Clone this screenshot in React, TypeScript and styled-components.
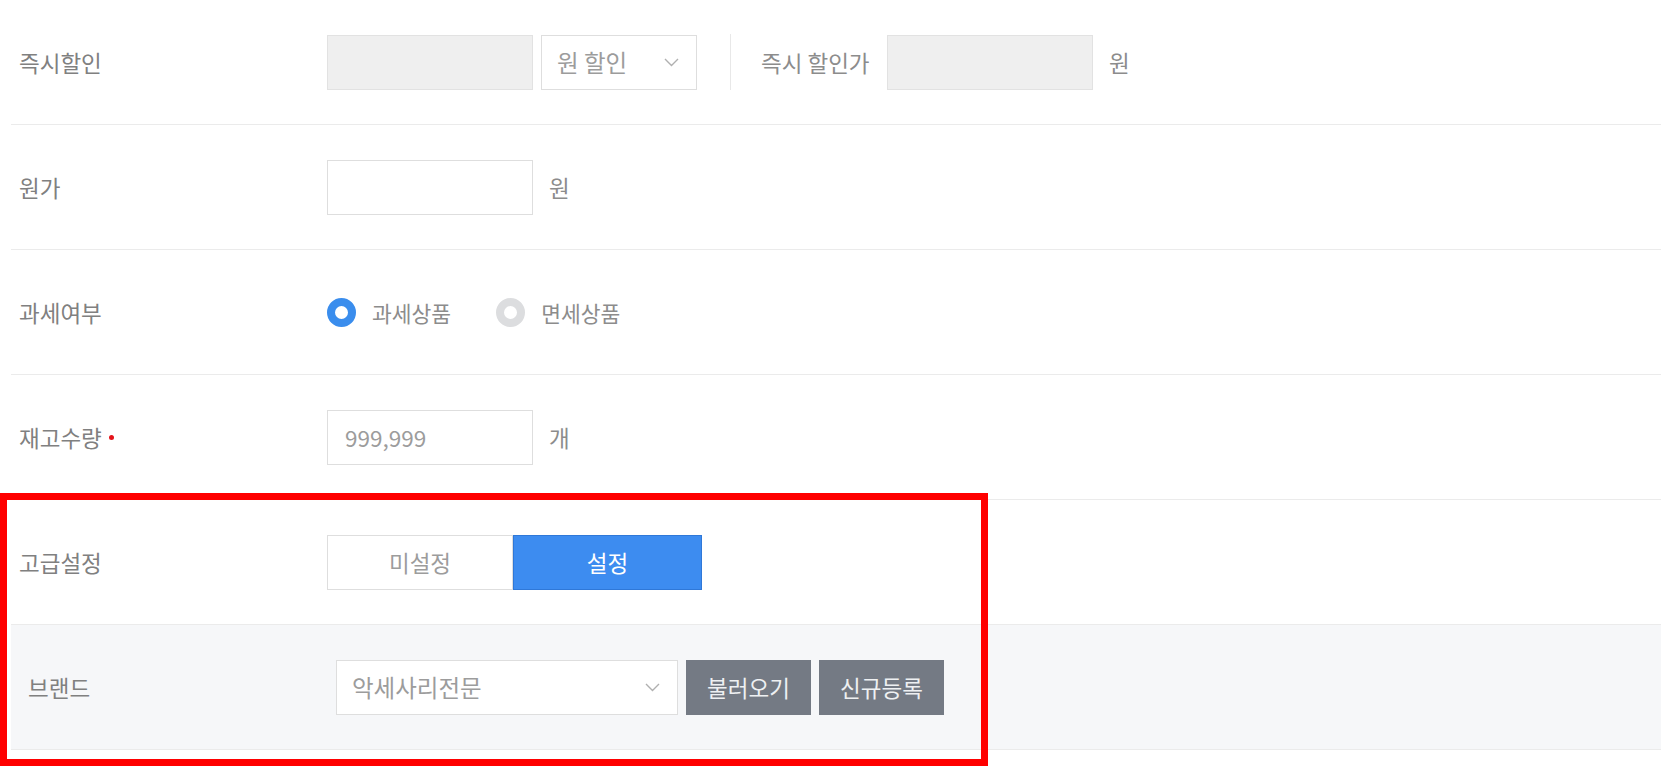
import React from "react";
import styled, { createGlobalStyle } from "styled-components";

const GlobalStyle = createGlobalStyle`
  html, body {
    margin: 0;
    padding: 0;
    background: #fff;
  }
  body {
    font-family: "Noto Sans CJK KR", "Noto Sans", sans-serif;
    overflow: hidden;
  }
`;

const Page = styled.div`
  position: relative;
  width: 1661px;
  height: 766px;
  overflow: hidden;
`;

const List = styled.div`
  margin-left: 11px;
`;

const Row = styled.div<{ $sub?: boolean }>`
  display: flex;
  align-items: center;
  height: 124px;
  padding-left: ${(p) => (p.$sub ? "17px" : "8px")};
  border-bottom: 1px solid #ebebeb;
  background: ${(p) => (p.$sub ? "#f6f7f9" : "#fff")};
  box-sizing: content-box;
`;

const Label = styled.div`
  width: 308px;
  display: flex;
  align-items: center;
  gap: 7px;
  font-size: 22.5px;
  color: #808080;
`;

const Required = styled.span`
  width: 5px;
  height: 5px;
  border-radius: 50%;
  background: #e4141b;
`;

const Field = styled.div`
  display: flex;
  align-items: center;
`;

const Input = styled.div<{ $disabled?: boolean }>`
  box-sizing: border-box;
  width: 206px;
  height: 55px;
  border: 1px solid ${(p) => (p.$disabled ? "#e2e2e2" : "#dedede")};
  background: ${(p) => (p.$disabled ? "#efefef" : "#fff")};
  padding-left: 17px;
  display: flex;
  align-items: center;
  font-size: 22.5px;
  color: #9c9c9c;
`;

const Select = styled.div<{ $width: number; $first?: boolean }>`
  box-sizing: border-box;
  width: ${(p) => p.$width}px;
  height: 55px;
  border: 1px solid #dedede;
  background: #fff;
  padding: 0 17px 0 15px;
  display: flex;
  align-items: center;
  justify-content: space-between;
  font-size: 23.5px;
  color: #9c9c9c;
  margin-left: ${(p) => (p.$first ? 0 : 8)}px;
`;

const Unit = styled.span`
  font-size: 22.5px;
  color: #8c8c8c;
  margin-left: 16px;
`;

const Divider = styled.div`
  width: 1px;
  height: 56px;
  background: #e8e8e8;
  margin: 0 30px 0 33px;
`;

const InlineLabel = styled.span`
  width: 126px;
  font-size: 22.5px;
  color: #8c8c8c;
  white-space: nowrap;
`;

const RadioGroup = styled.div`
  display: flex;
  align-items: center;
  gap: 45px;
`;

const RadioItem = styled.label`
  display: flex;
  align-items: center;
  gap: 16px;
  font-size: 21.5px;
  color: #8c8c8c;
`;

const RadioDot = styled.span<{ $on?: boolean }>`
  box-sizing: border-box;
  width: 29px;
  height: 29px;
  border-radius: 50%;
  border: 8px solid ${(p) => (p.$on ? "#3a8ded" : "#dcdddf")};
  background: #fff;
`;

const Segment = styled.div`
  display: flex;
`;

const SegButton = styled.button<{ $active?: boolean }>`
  box-sizing: border-box;
  height: 55px;
  width: ${(p) => (p.$active ? 189 : 186)}px;
  border: 1px solid ${(p) => (p.$active ? "#2f78d8" : "#dedede")};
  background: ${(p) => (p.$active ? "#3d8cf0" : "#fff")};
  color: ${(p) => (p.$active ? "#fff" : "#9c9c9c")};
  font-family: inherit;
  font-size: 22.5px;
  padding: 0;
`;

const DarkButton = styled.button`
  box-sizing: border-box;
  width: 125px;
  height: 55px;
  margin-left: 8px;
  border: none;
  background: #747a84;
  color: #eef0f2;
  font-family: inherit;
  font-size: 22.5px;
  padding: 0;
`;

const Frame = styled.div`
  position: absolute;
  left: 0;
  top: 493px;
  width: 988px;
  height: 273px;
  box-sizing: border-box;
  border: 7px solid #ff0000;
  pointer-events: none;
`;

function Chevron() {
  return (
    <svg width="15" height="9" viewBox="0 0 15 9">
      <polyline
        points="1,1 7.5,7.5 14,1"
        fill="none"
        stroke="#b0b0b0"
        strokeWidth="1.4"
      />
    </svg>
  );
}

export default function App() {
  return (
    <Page>
      <GlobalStyle />
      <List>
        <Row>
          <Label>즉시할인</Label>
          <Field>
            <Input $disabled />
            <Select $width={156}>
              <span>원 할인</span>
              <Chevron />
            </Select>
            <Divider />
            <InlineLabel>즉시 할인가</InlineLabel>
            <Input $disabled />
            <Unit>원</Unit>
          </Field>
        </Row>
        <Row>
          <Label>원가</Label>
          <Field>
            <Input />
            <Unit>원</Unit>
          </Field>
        </Row>
        <Row>
          <Label>과세여부</Label>
          <RadioGroup>
            <RadioItem>
              <RadioDot $on />
              과세상품
            </RadioItem>
            <RadioItem>
              <RadioDot />
              면세상품
            </RadioItem>
          </RadioGroup>
        </Row>
        <Row>
          <Label>
            재고수량
            <Required />
          </Label>
          <Field>
            <Input>999,999</Input>
            <Unit>개</Unit>
          </Field>
        </Row>
        <Row>
          <Label>고급설정</Label>
          <Segment>
            <SegButton>미설정</SegButton>
            <SegButton $active>설정</SegButton>
          </Segment>
        </Row>
        <Row $sub>
          <Label>브랜드</Label>
          <Field>
            <Select $width={342} $first>
              <span>악세사리전문</span>
              <Chevron />
            </Select>
            <DarkButton>불러오기</DarkButton>
            <DarkButton>신규등록</DarkButton>
          </Field>
        </Row>
      </List>
      <Frame />
    </Page>
  );
}
